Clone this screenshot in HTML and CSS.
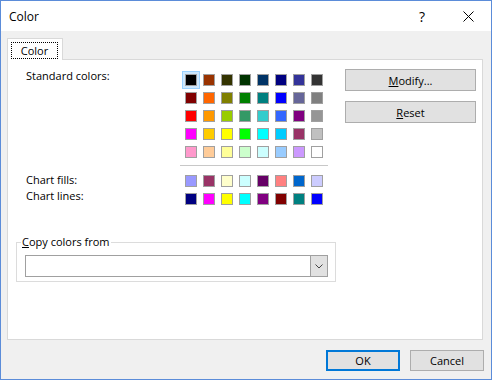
FILE: index.html
```html
<!DOCTYPE html>
<html lang="en">
<head>
    <meta charset="UTF-8">
    <meta name="viewport" content="width=device-width, initial-scale=1.0">
    <title>Color</title>
    <link rel="stylesheet" href="styles.css">
</head>
<body>

    <div class="window">
        <div class="titlebar">
            <span class="title">Color</span>
            <span class="caption-btn help">?</span>
            <span class="caption-btn close">
                <svg width="11" height="11" viewBox="0 0 11 11"><path d="M0.5 0.5L10.5 10.5M10.5 0.5L0.5 10.5" stroke="#000" stroke-width="1" fill="none"/></svg>
            </span>
        </div>

        <div class="content">
            <div class="tabs">
                <div class="tab"><span class="tab-label">Color</span></div>
            </div>

            <div class="panel">
                <div class="top">
                    <div class="palette">
                        <div class="label">Standard colors:</div>
                        <div class="swatches" id="standard"></div>
                        <div class="sep"></div>
                        <div class="label">Chart fills:<br>Chart lines:</div>
                        <div class="swatches" id="chart"></div>
                    </div>
                    <div class="actions">
                        <button class="btn wide"><u>M</u>odify...</button>
                        <button class="btn wide"><u>R</u>eset</button>
                    </div>
                </div>

                <fieldset class="copy">
                    <legend><u>C</u>opy colors from</legend>
                    <div class="combo">
                        <span class="combo-arrow">
                            <svg width="8" height="5" viewBox="0 0 8 5"><path d="M0.5 0.5L4 4L7.5 0.5" stroke="#444" stroke-width="1" fill="none"/></svg>
                        </span>
                    </div>
                </fieldset>
            </div>

            <div class="footer">
                <button class="btn default">OK</button>
                <button class="btn">Cancel</button>
            </div>
        </div>
    </div>

    <script>
        const standardColors = [
            '#000000', '#993300', '#333300', '#003300', '#003366', '#000080', '#333399', '#333333',
            '#800000', '#ff6600', '#808000', '#008000', '#008080', '#0000ff', '#666699', '#808080',
            '#ff0000', '#ff9900', '#99cc00', '#339966', '#33cccc', '#3366ff', '#800080', '#969696',
            '#ff00ff', '#ffcc00', '#ffff00', '#00ff00', '#00ffff', '#00ccff', '#993366', '#c0c0c0',
            '#ff99cc', '#ffcc99', '#ffff99', '#ccffcc', '#ccffff', '#99ccff', '#cc99ff', '#ffffff'
        ];
        const chartColors = [
            '#9999ff', '#993366', '#ffffcc', '#ccffff', '#660066', '#ff8080', '#0066cc', '#ccccff',
            '#000080', '#ff00ff', '#ffff00', '#00ffff', '#800080', '#800000', '#008080', '#0000ff'
        ];

        // Farbfelder aufbauen
        function fillSwatches(id, colors, selected) {
            const grid = document.getElementById(id);
            colors.forEach((color, i) => {
                const cell = document.createElement('div');
                cell.className = i === selected ? 'cell selected' : 'cell';
                const swatch = document.createElement('div');
                swatch.className = 'swatch';
                swatch.style.backgroundColor = color;
                cell.appendChild(swatch);
                grid.appendChild(cell);
            });
        }

        fillSwatches('standard', standardColors, 0);
        fillSwatches('chart', chartColors, -1);
    </script>

</body>
</html>
```

FILE: styles.css
```css
body {
    margin: 0;
    font-family: "Open Sans", "Liberation Sans", sans-serif;
    font-size: 11px;
    color: #000;
}
.window {
    width: 492px;
    height: 380px;
    box-sizing: border-box;
    border: 1px solid #5b8cd9;
    background-color: #f0f0f0;
}
.titlebar {
    display: flex;
    align-items: center;
    height: 30px;
    background-color: #fff;
}
.title {
    flex: 1;
    padding-left: 8px;
    font-size: 12px;
}
.caption-btn {
    display: flex;
    align-items: center;
    justify-content: center;
    width: 46px;
    height: 30px;
}
.help {
    font-size: 14px;
}
.content {
    padding: 7px 8px 0 6px;
}
.tabs {
    display: flex;
}
.tab {
    position: relative;
    z-index: 1;
    margin-bottom: -1px;
    padding: 3px 4px 1px 3px;
    background-color: #fff;
    border: 1px solid #d9d9d9;
    border-bottom: none;
}
.tab-label {
    display: block;
    width: 45px;
    height: 15px;
    line-height: 15px;
    text-align: center;
    border: 1px dotted #000;
}
.panel {
    height: 281px;
    box-sizing: border-box;
    background-color: #fff;
    border: 1px solid #d9d9d9;
}
.top {
    display: flex;
    align-items: flex-start;
    padding: 8px 0 0 18px;
}
.palette {
    display: grid;
    grid-template-columns: 156px 144px;
}
.label {
    line-height: 16px;
}
.swatches {
    display: grid;
    grid-template-columns: repeat(8, 18px);
    grid-auto-rows: 18px;
}
#standard {
    margin-top: 3px;
}
.sep {
    grid-column: 2;
    width: 148px;
    height: 1px;
    margin: 4px 0 6px -2px;
    background-color: #c8c8c8;
}
.cell {
    display: flex;
    align-items: center;
    justify-content: center;
    box-sizing: border-box;
}
.cell.selected {
    border: 1px solid #99d1ff;
    background-color: #cce8ff;
}
.swatch {
    width: 12px;
    height: 12px;
    box-sizing: border-box;
    border: 1px solid #a0a0a0;
}
.actions {
    display: flex;
    flex-direction: column;
    gap: 10px;
    margin: 1px 0 0 19px;
}
.btn {
    font: inherit;
    color: #000;
    padding: 0;
    box-sizing: border-box;
    background-color: #e1e1e1;
    border: 1px solid #adadad;
}
.btn.wide {
    width: 131px;
    height: 22px;
}
.copy {
    width: 320px;
    min-inline-size: 0;
    box-sizing: border-box;
    margin: 26px 0 0 8px;
    padding: 0 7px 4px 8px;
    border: 1px solid #dcdcdc;
}
.copy legend {
    padding: 0 1px;
    margin-left: -4px;
    line-height: 16px;
}
.combo {
    display: flex;
    justify-content: flex-end;
    height: 22px;
    margin-top: 5px;
    box-sizing: border-box;
    background-color: #fff;
    border: 1px solid #a0a0a0;
}
.combo-arrow {
    display: flex;
    align-items: center;
    justify-content: center;
    width: 16px;
    background-color: #e1e1e1;
    border-left: 1px solid #a0a0a0;
}
.footer {
    display: flex;
    justify-content: flex-end;
    gap: 10px;
    margin: 10px -1px 0 0;
}
.footer .btn {
    width: 74px;
    height: 21px;
}
.btn.default {
    border: 2px solid #0078d7;
}
```
